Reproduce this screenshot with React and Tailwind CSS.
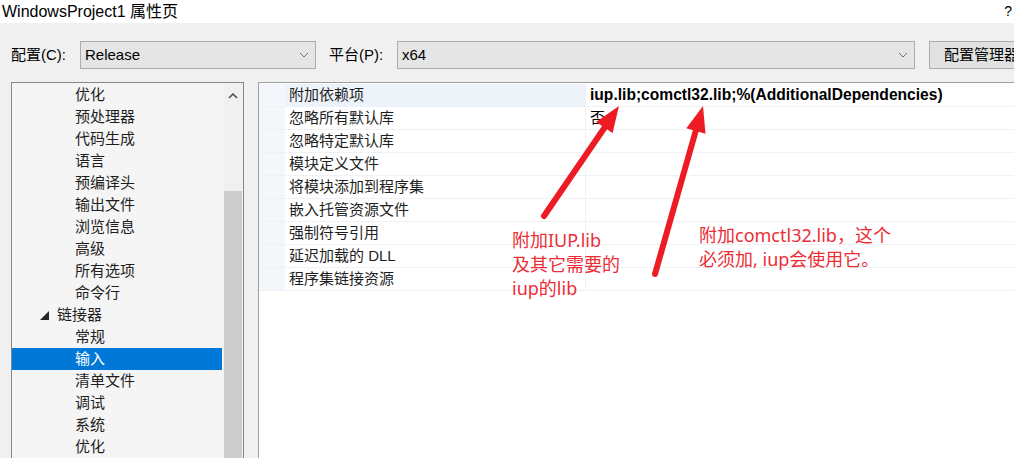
import React from 'react';

const FONT = { fontFamily: '"Liberation Sans", "Noto Sans CJK SC", sans-serif' };
const NOTE_FONT = { fontFamily: '"Noto Sans", "Noto Sans CJK SC", sans-serif' };

// 左侧树
const treeItems = [
  { label: '优化' }, { label: '预处理器' }, { label: '代码生成' }, { label: '语言' },
  { label: '预编译头' }, { label: '输出文件' }, { label: '浏览信息' }, { label: '高级' },
  { label: '所有选项' }, { label: '命令行' },
  { label: '链接器', group: true },
  { label: '常规' }, { label: '输入', selected: true }, { label: '清单文件' },
  { label: '调试' }, { label: '系统' }, { label: '优化' },
];

// 右侧属性表
const props = [
  { name: '附加依赖项', value: 'iup.lib;comctl32.lib;%(AdditionalDependencies)', bold: true, active: true },
  { name: '忽略所有默认库', value: '否' },
  { name: '忽略特定默认库' },
  { name: '模块定义文件' },
  { name: '将模块添加到程序集' },
  { name: '嵌入托管资源文件' },
  { name: '强制符号引用' },
  { name: '延迟加载的 DLL' },
  { name: '程序集链接资源' },
];

const Chevron = ({ up }) => (
  <svg width="10" height="6" viewBox="0 0 10 6" className="shrink-0">
    <polyline points={up ? '1,5 5,1 9,5' : '1,1 5,5 9,1'} fill="none" stroke={up ? '#505050' : '#707070'} strokeWidth={up ? 1.6 : 1} />
  </svg>
);

const Select = ({ value, width }) => (
  <div className={`${width} h-[28px] shrink-0 border border-[#adadad] bg-[#e5e5e5] flex items-center justify-between pl-[4px] pr-[6px]`}>
    <span className="text-[15px] text-black">{value}</span>
    <Chevron />
  </div>
);

export default function App() {
  return (
    <div className="w-[1014px] h-[458px] overflow-hidden bg-[#f0f0f0] relative flex flex-col" style={FONT}>
      {/* Title */}
      <div className="h-[23px] bg-white flex items-center justify-between pl-[2px] pr-[2px] shrink-0">
        <span className="text-[16px] text-black">WindowsProject1 属性页</span>
        <span className="text-[14px] text-black">?</span>
      </div>

      {/* Config row */}
      <div className="flex items-center mt-[18px] h-[28px] shrink-0">
        <span className="ml-[11px] w-[69px] shrink-0 text-[15px] text-black">配置(C):</span>
        <Select value="Release" width="w-[236px]" />
        <span className="ml-[13px] w-[68px] shrink-0 text-[15px] text-black">平台(P):</span>
        <Select value="x64" width="w-[518px]" />
        <div className="ml-[14px] w-[100px] h-[28px] border border-[#adadad] bg-[#e1e1e1] flex items-center pl-[14px] shrink-0">
          <span className="text-[15px] text-black whitespace-nowrap">配置管理器</span>
        </div>
      </div>

      {/* Panels */}
      <div className="flex mt-[13px] flex-1 min-h-0">
        {/* Tree */}
        <div className="ml-[11px] w-[233px] border border-b-0 border-[#828790] bg-[#f5f5f5] flex shrink-0">
          <div className="w-[210px] pt-[1px] flex flex-col">
            {treeItems.map((t, i) => (
              <div key={i} className={`h-[22px] flex items-center shrink-0 ${t.selected ? 'bg-[#0078d7] text-white' : 'text-[#1e1e1e]'}`}>
                {t.group ? (
                  <>
                    <svg width="9" height="9" viewBox="0 0 9 9" className="ml-[28px]">
                      <polygon points="0,9 9,9 9,0" fill="#262626" />
                    </svg>
                    <span className="ml-[8px] text-[15px]">{t.label}</span>
                  </>
                ) : (
                  <span className="ml-[63px] text-[15px]">{t.label}</span>
                )}
              </div>
            ))}
          </div>
          <div className="w-[21px] bg-[#f0f0f0] border-l border-[#fafafa] flex flex-col">
            <div className="h-[24px] flex items-center justify-center pt-[2px]">
              <Chevron up />
            </div>
            <div className="h-[84px]" />
            <div className="flex-1 mx-[1px] bg-[#cdcdcd]" />
          </div>
        </div>

        {/* Property grid */}
        <div className="ml-[14px] flex-1 border-l border-t border-[#a0a0a0] bg-white pt-[1px] flex flex-col">
          {props.map((p, i) => (
            <div key={i} className="h-[23px] flex border-b border-[#eef1f6] shrink-0">
              <div className="w-[26px] bg-[#f3f6fb]" />
              <div className={`w-[300px] flex items-center pl-[4px] ${p.active ? 'bg-[#eef3fa]' : 'bg-white'}`}>
                <span className="text-[15px] text-[#1e1e1e] whitespace-nowrap">{p.name}</span>
              </div>
              <div className="flex-1 border-l border-[#eef1f6] flex items-center pl-[4px]">
                {p.value && (
                  <span className={`text-black whitespace-nowrap ${p.bold ? 'font-bold text-[15.6px]' : 'text-[15px]'}`}>{p.value}</span>
                )}
              </div>
            </div>
          ))}
        </div>
      </div>

      {/* Annotations */}
      <svg className="absolute left-0 top-0 pointer-events-none" width="1014" height="458">
        <line x1="544" y1="216" x2="605" y2="127" stroke="#ed1c24" strokeWidth="6" strokeLinecap="round" />
        <polygon points="619,106 612.6,133.1 596,121.9" fill="#ed1c24" />
        <line x1="655" y1="274" x2="696" y2="130" stroke="#ed1c24" strokeWidth="6" strokeLinecap="round" />
        <polygon points="703,106 705.5,133.8 686.3,128.3" fill="#ed1c24" />
      </svg>
      <div className="absolute left-[512px] top-[228px] text-[18px] leading-[24px] text-[#ec2d36] whitespace-nowrap" style={NOTE_FONT}>
        <div>附加IUP.lib</div>
        <div>及其它需要的</div>
        <div>iup的lib</div>
      </div>
      <div className="absolute left-[699px] top-[223px] text-[18px] leading-[24px] text-[#ec2d36] whitespace-nowrap" style={NOTE_FONT}>
        <div>附加comctl32.lib，这个</div>
        <div>必须加, iup会使用它。</div>
      </div>
    </div>
  );
}
